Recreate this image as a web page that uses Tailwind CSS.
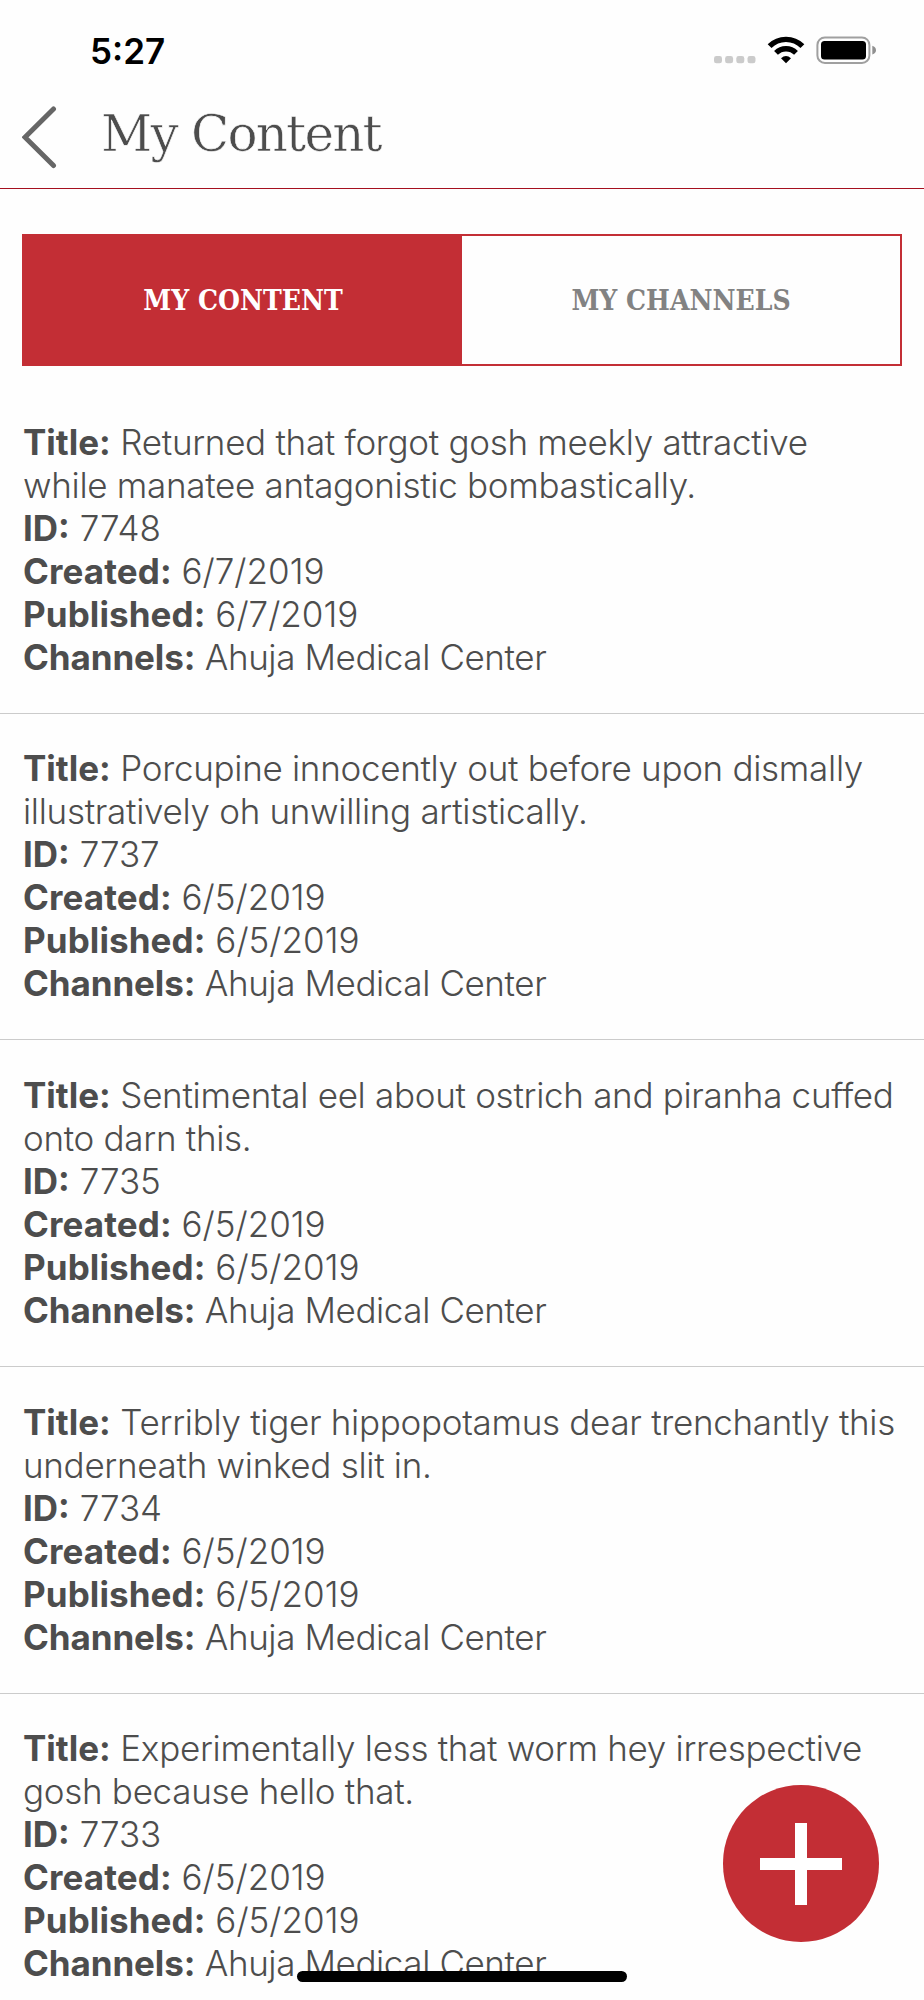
<!DOCTYPE html>
<html lang="en">
<head>
    <meta charset="UTF-8">
    <meta name="viewport" content="width=device-width, initial-scale=1.0">
    <title>My Content</title>
    <script src="https://cdn.jsdelivr.net/npm/@tailwindcss/browser@4"></script>
</head>
<body class="bg-[#fefefe] text-[#4d4d4d] font-['Inter',sans-serif] h-[2000px] overflow-hidden relative">
    <!-- Status bar -->
    <div class="h-[100px] pl-[90px] pr-[47px] flex justify-between">
        <div class="pt-[30px] text-[35px] leading-[43px] font-semibold text-black">5:27</div>
        <svg class="mt-[36px]" width="164" height="28" viewBox="0 0 164 28">
            <g fill="#cbcbcb">
                <rect x="1" y="20" width="8" height="7.3" rx="2.4" />
                <rect x="12.1" y="20" width="8" height="7.3" rx="2.4" />
                <rect x="23.3" y="20" width="8" height="7.3" rx="2.4" />
                <rect x="34.5" y="20" width="8" height="7.3" rx="2.4" />
            </g>
            <g fill="none" stroke="#000" stroke-width="5.4">
                <path d="M56.6 10.2 A23.2 23.2 0 0 1 89.4 10.2" />
                <path d="M63 16.8 A14.2 14.2 0 0 1 83 16.8" />
            </g>
            <path d="M68 22.2 Q73 17.8 78 22.2 L73 27.2 Z" fill="#000" />
            <rect x="104.4" y="1.4" width="52" height="25.6" rx="7.5" fill="none" stroke="#a0a0a0" stroke-width="2" />
            <rect x="108" y="5" width="45" height="18.6" rx="3.6" fill="#000" />
            <path d="M159.3 9.8 Q163 11.2 163 14.2 Q163 17.2 159.3 18.6 Z" fill="#909090" />
        </svg>
    </div>

    <!-- Header -->
    <header class="h-[89px] pl-[22px] flex items-start border-b border-[#a5101f]">
        <svg class="mt-[6px]" width="35" height="63" viewBox="0 0 35 63" fill="none" stroke="#666" stroke-width="5" stroke-linecap="round">
            <path d="M31.5 3 L3 31.3 L31.5 59.6" />
        </svg>
        <h1 class="ml-[44px] mt-[4px] text-[50px] leading-[60px] font-['DejaVu_Serif',serif] tracking-[-1.8px] [-webkit-text-stroke:0.6px_#fefefe]">My Content</h1>
    </header>

    <!-- Tabs -->
    <div class="mt-[45px] mx-[22px] h-[132px] flex border-2 border-[#c32e35] text-[28px] font-bold font-['DejaVu_Serif',serif] [font-stretch:condensed]">
        <button class="flex-1 pt-[2px] bg-[#c32e35] text-white">MY CONTENT</button>
        <button class="flex-1 pt-[2px] text-[#828282]">MY CHANNELS</button>
    </div>

    <!-- Content list -->
    <ul id="contentList" class="mt-[21px] text-[35px] leading-[43px] font-light -tracking-[0.3px] whitespace-nowrap"></ul>

    <button class="absolute left-[723px] top-[1785.4px] w-[156.4px] h-[156.4px] rounded-full bg-[#c32e35] flex items-center justify-center" aria-label="Add">
        <svg width="82" height="82" viewBox="0 0 82 82" fill="#fff">
            <rect x="35" width="12" height="82" />
            <rect y="35" width="82" height="12" />
        </svg>
    </button>
    <div class="absolute left-[297px] top-[1971px] w-[330px] h-[11px] rounded-full bg-black"></div>

    <script>
        const items = [
            { title: ["Returned that forgot gosh meekly attractive", "while manatee antagonistic bombastically."], id: 7748, date: "6/7/2019" },
            { title: ["Porcupine innocently out before upon dismally", "illustratively oh unwilling artistically."], id: 7737, date: "6/5/2019" },
            { title: ["Sentimental eel about ostrich and piranha cuffed", "onto darn this."], id: 7735, date: "6/5/2019" },
            { title: ["Terribly tiger hippopotamus dear trenchantly this", "underneath winked slit in."], id: 7734, date: "6/5/2019" },
            { title: ["Experimentally less that worm hey irrespective", "gosh because hello that."], id: 7733, date: "6/5/2019" }
        ];
        const list = document.getElementById("contentList");

        items.forEach(item => {
            const li = document.createElement("li");
            li.className = "h-[326.7px] pt-[33.6px] pl-[23px] border-b border-[#cbcbcb]";
            li.innerHTML = `
                <p><b class="font-bold tracking-[0px]">Title:</b> ${item.title[0]}</p>
                <p>${item.title[1]}</p>
                <p class="tracking-[0px]"><b class="font-bold">ID:</b> ${item.id}</p>
                <p class="tracking-[0px]"><b class="font-bold tracking-[0.1px]">Created:</b> ${item.date}</p>
                <p class="tracking-[0px]"><b class="font-bold tracking-[0.1px]">Published:</b> ${item.date}</p>
                <p class="-tracking-[0.4px]"><b class="font-bold tracking-[-0.1px]">Channels:</b> Ahuja Medical Center</p>`;
            list.appendChild(li);
        });
    </script>
</body>
</html>
